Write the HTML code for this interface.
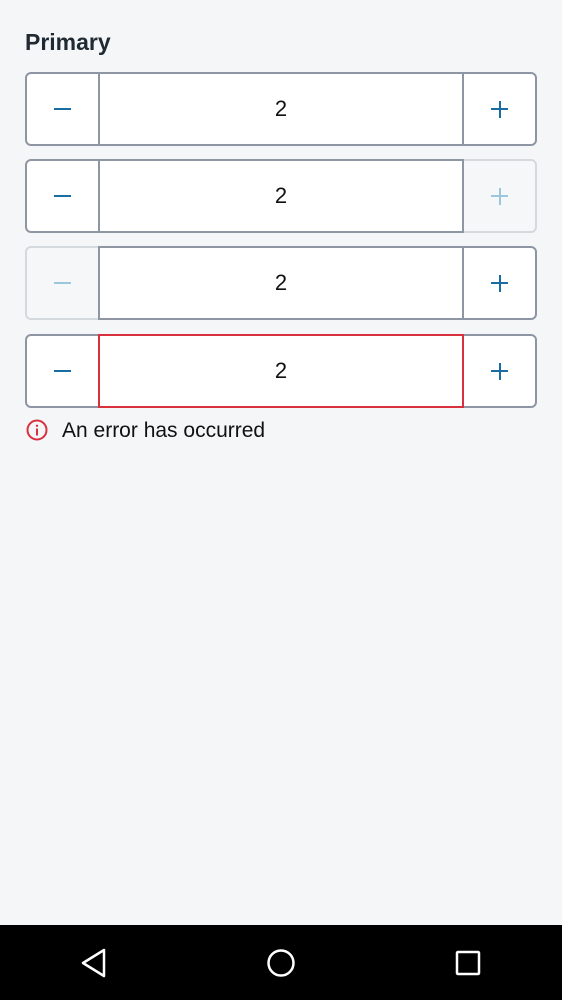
<!DOCTYPE html>
<html><head><meta charset="utf-8"><style>
*{box-sizing:border-box;margin:0;padding:0}
body{width:562px;height:1000px;background:#f5f6f8;font-family:"Liberation Sans",Roboto,sans-serif;position:relative;overflow:hidden}
h1{position:absolute;left:25px;top:29px;font-size:23px;font-weight:bold;color:#1f2a33}
.b{position:absolute;height:74px;border:2px solid #8d96a2;background:#fff}
.m{left:25px;width:75px;border-radius:6px 0 0 6px}
.i{left:98px;width:366px;font-size:22px;color:#111;text-align:center;line-height:70px;z-index:2}
.p{left:462px;width:75px;border-radius:0 6px 6px 0}
.d{border-color:#d4d9de;background:#f6f7f9}
.e{border-color:#d9303e}
.ic{position:absolute;left:50%;top:50%;width:17px;height:2px;margin:-1px 0 0 -8.5px;background:#1a6da3}
.ic.v:after{content:"";position:absolute;left:7.5px;top:-7.5px;width:2px;height:17px;background:inherit}
.d .ic{background:#9cc6dc}
.err{position:absolute;left:62px;top:419px;font-size:21px;color:#111}
.nav{position:absolute;left:0;top:925px;width:562px;height:75px;background:#000}
</style></head><body>
<h1>Primary</h1>

<div class="b m" style="top:72px"><div class="ic"></div></div>
<div class="b i" style="top:72px">2</div>
<div class="b p" style="top:72px"><div class="ic v"></div></div>

<div class="b m" style="top:159px"><div class="ic"></div></div>
<div class="b i" style="top:159px">2</div>
<div class="b p d" style="top:159px"><div class="ic v"></div></div>

<div class="b m d" style="top:246px"><div class="ic"></div></div>
<div class="b i" style="top:246px">2</div>
<div class="b p" style="top:246px"><div class="ic v"></div></div>

<div class="b m" style="top:334px"><div class="ic"></div></div>
<div class="b i e" style="top:334px">2</div>
<div class="b p" style="top:334px"><div class="ic v"></div></div>

<svg style="position:absolute;left:26px;top:419px" width="22" height="22" viewBox="0 0 22 22"><circle cx="11" cy="11" r="9.5" fill="none" stroke="#d9303e" stroke-width="2"/><rect x="10" y="9.5" width="2" height="7" fill="#d9303e"/><circle cx="11" cy="6.8" r="1.2" fill="#d9303e"/></svg>
<div class="err">An error has occurred</div>

<div class="nav">
<svg style="position:absolute;left:80px;top:23px" width="28" height="30" viewBox="0 0 28 30"><path d="M24 2 L3 15 L24 28 Z" fill="none" stroke="#fff" stroke-width="2.5" stroke-linejoin="round"/></svg>
<svg style="position:absolute;left:266px;top:23px" width="30" height="30" viewBox="0 0 30 30"><circle cx="15" cy="15" r="12.5" fill="none" stroke="#fff" stroke-width="2.5"/></svg>
<svg style="position:absolute;left:455px;top:25px" width="26" height="26" viewBox="0 0 26 26"><rect x="2" y="2" width="22" height="22" rx="1" fill="none" stroke="#fff" stroke-width="2.5"/></svg>
</div>
</body></html>
